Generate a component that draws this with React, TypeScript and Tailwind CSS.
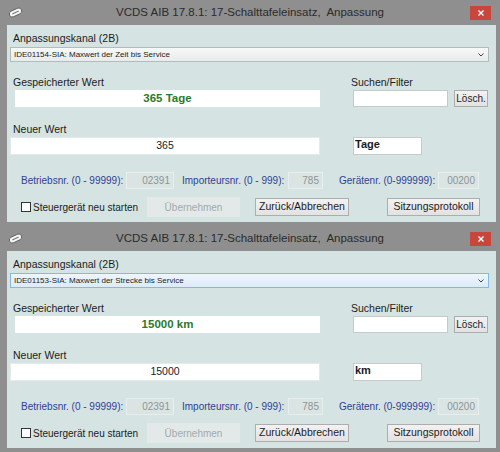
import React from 'react';

interface WindowProps {
  channel: string;
  stored: string;
  value: string;
  unit: string;
  focused?: boolean;
}

function Logo() {
  return (
    <svg width="15" height="11" viewBox="0 0 15 11">
      <g transform="rotate(-25 7.5 5.5)">
        <rect x="1" y="2.5" width="13" height="6" rx="3" fill="#f6f6f6" stroke="#555" strokeWidth="0.8" />
        <path d="M4 5.5h7" stroke="#7a7a7a" strokeWidth="1.2" />
      </g>
    </svg>
  );
}

function CloseButton() {
  return (
    <div className="flex h-[14px] w-[21px] items-center justify-center bg-[#c8463c]">
      <svg width="6" height="6" viewBox="0 0 6 6">
        <path d="M0.5 0.5l5 5M5.5 0.5l-5 5" stroke="#fff" strokeWidth="1.4" />
      </svg>
    </div>
  );
}

function NumField({ value, width }: { value: string; width: string }) {
  return (
    <div
      className={`flex h-[17px] ${width} items-center justify-end border border-[#e8eeed] bg-[#dae4e3] pr-[3px] text-[10px] text-[#8d9595]`}
    >
      {value}
    </div>
  );
}

function Window({ channel, stored, value, unit, focused }: WindowProps) {
  return (
    <div className="flex h-[226px] flex-col">
      {/* Title bar */}
      <div className="flex h-[25px] shrink-0 items-center">
        <div className="flex w-[40px] pl-[8px]">
          <Logo />
        </div>
        <div className="flex-1 whitespace-pre text-center text-[11.5px] text-[#2b2b2b]">
          VCDS AIB 17.8.1: 17-Schalttafeleinsatz,  Anpassung
        </div>
        <div className="flex w-[40px] justify-end pr-[9px]">
          <CloseButton />
        </div>
      </div>

      {/* Client area */}
      <div className="ml-[7px] mr-[4px] h-[197px] shrink-0 bg-[#d5e3e2] pt-[5px] text-[10.5px] text-[#1c1c1c]">
        <div className="h-[16px] pl-[6px] leading-[16px]">Anpassungskanal (2B)</div>
        <div
          className={`ml-[3px] mt-[1px] flex h-[15px] w-[479px] items-center justify-between border pl-[3px] pr-[4px] text-[8px] ${
            focused
              ? 'border-[#86b8e6] bg-gradient-to-b from-[#eef6fd] to-[#dcebf8]'
              : 'border-[#b3bcbc] bg-gradient-to-b from-[#f7f8f8] to-[#e9ecec]'
          }`}
        >
          <span>{channel}</span>
          <svg width="6" height="4" viewBox="0 0 6 4">
            <path d="M0.5 0.5L3 3l2.5-2.5" fill="none" stroke="#444" strokeWidth="1" />
          </svg>
        </div>

        {/* Stored value + search */}
        <div className="mt-[12px] flex">
          <div className="w-[341px]">
            <div className="h-[16px] pl-[6px] leading-[16px]">Gespeicherter Wert</div>
            <div className="ml-[8px] flex h-[17px] w-[305px] items-center justify-center bg-white text-[11.5px] font-bold text-[#2b7a2b]">
              {stored}
            </div>
          </div>
          <div>
            <div className="h-[16px] pl-[3px] leading-[16px]">Suchen/Filter</div>
            <div className="ml-[5px] flex gap-[6px]">
              <div className="h-[17px] w-[95px] border border-[#c3cbcb] bg-white" />
              <div className="flex h-[17px] w-[34px] items-center justify-center border border-[#adadad] bg-gradient-to-b from-[#f2f2f2] to-[#e2e2e2] text-[10px]">
                Lösch.
              </div>
            </div>
          </div>
        </div>

        {/* New value */}
        <div className="mt-[14px] flex">
          <div className="w-[341px]">
            <div className="h-[16px] pl-[6px] leading-[16px]">Neuer Wert</div>
            <div className="ml-[3px] flex h-[18px] w-[310px] items-center justify-center border border-[#e4eaea] bg-white text-[10.5px]">
              {value}
            </div>
          </div>
          <div className="pl-[5px] pt-[16px]">
            <div className="h-[18px] w-[69px] border border-[#c3cbcb] bg-white pl-[1px] text-[11px] font-bold leading-[13px]">
              {unit}
            </div>
          </div>
        </div>

        {/* Numbers row */}
        <div className="mt-[17px] flex h-[17px] items-center pl-[14px] text-[10px] text-[#2f3f90]">
          <div className="w-[105px]">Betriebsnr. (0 - 99999):</div>
          <NumField value="02391" width="w-[48px]" />
          <div className="ml-[8px] w-[106px]">Importeursnr. (0 - 999):</div>
          <NumField value="785" width="w-[35px]" />
          <div className="ml-[16px] w-[99px]">Gerätenr. (0-999999):</div>
          <NumField value="00200" width="w-[41px]" />
        </div>

        {/* Buttons row */}
        <div className="mt-[8px] flex h-[20px] items-center pl-[14px]">
          <div className="flex w-[126px] items-center gap-[2px]">
            <div className="h-[10px] w-[10px] shrink-0 border border-[#333] bg-white" />
            <span className="text-[10px]">Steuergerät neu starten</span>
          </div>
          <div className="flex h-[20px] w-[93px] items-center justify-center bg-[#e2e9e8] text-[10px] text-[#a2aaaa]">
            Übernehmen
          </div>
          <div className="ml-[15px] flex h-[18px] w-[94px] items-center justify-center border border-[#adadad] bg-gradient-to-b from-[#f2f2f2] to-[#e2e2e2] text-[10.5px]">
            Zurück/Abbrechen
          </div>
          <div className="ml-[38px] flex h-[18px] w-[93px] items-center justify-center border border-[#adadad] bg-gradient-to-b from-[#f2f2f2] to-[#e2e2e2] text-[10.5px]">
            Sitzungsprotokoll
          </div>
        </div>
      </div>
    </div>
  );
}

export default function App() {
  return (
    <div className="h-[452px] w-[500px] overflow-hidden bg-[#8f8f8f] font-['Liberation_Sans',Arial,sans-serif]">
      <Window
        channel="IDE01154-SIA: Maxwert der Zeit bis Service"
        stored="365 Tage"
        value="365"
        unit="Tage"
      />
      <Window
        channel="IDE01153-SIA: Maxwert der Strecke bis Service"
        stored="15000 km"
        value="15000"
        unit="km"
        focused
      />
    </div>
  );
}
